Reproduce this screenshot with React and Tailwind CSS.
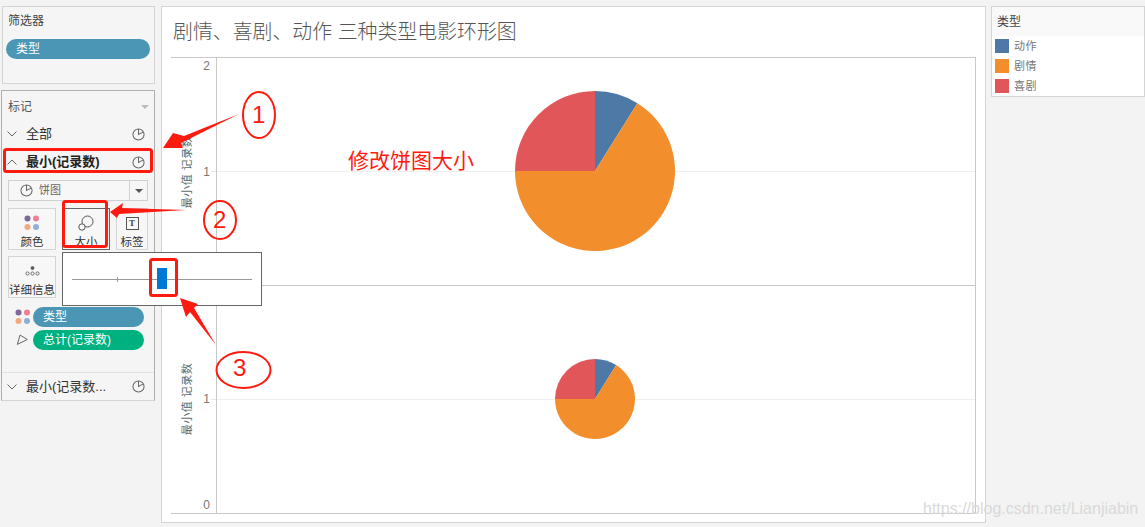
const CJK = '[font-family:"Liberation_Sans","Noto_Sans_CJK_SC",sans-serif]';

function PieIcon({ size = 13, color = '#666' }) {
  return (
    <svg width={size} height={size} viewBox="0 0 14 14" fill="none" stroke={color} strokeWidth="1.1">
      <circle cx="7" cy="7" r="6" />
      <path d="M7 1v6l4.8-2.6" stroke={color} />
    </svg>
  );
}

function Chevron({ up }) {
  return (
    <svg width="10" height="6" viewBox="0 0 10 6" fill="none" stroke="#666" strokeWidth="1">
      <path d={up ? 'M0.5 5.5L5 1l4.5 4.5' : 'M0.5 0.5L5 5l4.5-4.5'} />
    </svg>
  );
}

function ColorDots() {
  return (
    <svg width="16" height="16" viewBox="0 0 16 16">
      <circle cx="3.5" cy="3.5" r="3" fill="#7b6a9b" />
      <circle cx="12" cy="3.5" r="3" fill="#ef7f93" />
      <circle cx="3.5" cy="12" r="3" fill="#f2a97e" />
      <circle cx="12" cy="12" r="3" fill="#8db0d6" />
    </svg>
  );
}

function MarkButton({ label, icon, className = 'w-12' }) {
  return (
    <div className={`h-[42px] shrink-0 border border-[#d4d4d4] flex flex-col items-center justify-between pt-[5px] text-[11.5px] leading-[14px] text-[#333] bg-[#f7f7f7] ${className}`}>
      <div className="h-[18px] flex items-center">{icon}</div>
      <span className="whitespace-nowrap">{label}</span>
    </div>
  );
}

function Pill({ label, color, className = '' }) {
  return (
    <div className={`h-5 rounded-full text-white text-[12px] leading-5 pl-[10px] ${className}`} style={{ backgroundColor: color }}>
      {label}
    </div>
  );
}

function Pie({ r, cut }) {
  const c = r;
  const a = (cut * Math.PI) / 180;
  const x = c + r * Math.sin(a);
  const y = c - r * Math.cos(a);
  return (
    <svg width={r * 2} height={r * 2} viewBox={`0 0 ${r * 2} ${r * 2}`} className="relative">
      <path d={`M${c} ${c}L${c} 0A${r} ${r} 0 0 1 ${x} ${y}Z`} fill="#4e79a7" />
      <path d={`M${c} ${c}L${x} ${y}A${r} ${r} 0 1 1 0 ${c}Z`} fill="#f28e2b" />
      <path d={`M${c} ${c}L0 ${c}A${r} ${r} 0 0 1 ${c} 0Z`} fill="#e15759" />
    </svg>
  );
}

function AxisPane({ top, bottom, className = '' }) {
  return (
    <div className={`relative flex-1 flex items-center justify-end py-px ${className}`}>
      <span className="absolute left-[9px] top-1/2 -translate-y-1/2 rotate-180 [writing-mode:vertical-rl] [text-orientation:sideways] text-[11px] leading-[14px] tracking-[0.5px] text-[#5d6d6d] whitespace-nowrap">
        最小值 记录数
      </span>
      <div className="h-full flex flex-col justify-between items-end text-[12px] leading-[14px] text-[#777] pr-[6px]">
        <span className="h-[14px]">{top}</span>
        <span className="h-[14px]">1</span>
        <span className="h-[14px]">{bottom}</span>
      </div>
      <span className="absolute right-0 top-[113px] w-[5px] h-px bg-[#e6e6e6]" />
    </div>
  );
}

function PlotPane({ r, className = '' }) {
  return (
    <div className={`relative flex-1 flex items-center justify-center pb-[2px] pr-[2px] ${className}`}>
      <span className="absolute inset-x-0 top-[113px] h-px bg-[#efefef]" />
      <Pie r={r} cut={32} />
    </div>
  );
}

function LegendRow({ color, label }) {
  return (
    <div className="h-5 flex items-center gap-[5px]">
      <span className="w-[14px] h-[14px]" style={{ backgroundColor: color }} />
      <span className="pt-px text-[11px] text-[#777] tracking-[0.5px]">{label}</span>
    </div>
  );
}

function Annotations() {
  const red = '#ff1a0f';
  return (
    <svg width="1145" height="527" viewBox="0 0 1145 527" fill="none" className="absolute left-0 top-0 pointer-events-none">
      <rect x="4.5" y="149.5" width="147" height="22" rx="2" stroke={red} strokeWidth="3" />
      <rect x="63.5" y="201.5" width="43" height="45" rx="2" stroke={red} strokeWidth="3" />
      <rect x="150.5" y="259.5" width="26" height="36" rx="2" stroke={red} strokeWidth="3" />
      <ellipse cx="259" cy="115" rx="16" ry="23" stroke={red} strokeWidth="2" />
      <ellipse cx="220" cy="220" rx="16" ry="19" stroke={red} strokeWidth="2" />
      <ellipse cx="243.5" cy="370" rx="27" ry="18" stroke={red} strokeWidth="2" />
      <polygon points="239,114 184,136 173,133 163,148 183,148 181,143" fill={red} />
      <polygon points="186,210 122,208 123,203 110,212 117,218 119,214" fill={red} />
      <polygon points="216,345 194,308 198,304 180,298 186,317 190,312" fill={red} />
    </svg>
  );
}

export default function App() {
  return (
    <div className={`relative w-[1145px] h-[527px] overflow-hidden bg-[#f3f3f3] ${CJK}`}>
      <div className="flex h-full pt-[6px] pb-[4px] pl-[1px]">
        {/* left column */}
        <div className="w-[154px] shrink-0 flex flex-col gap-[6px]">
          <div className="h-[78px] border border-[#d4d4d4] bg-[#f5f5f5] pl-[3px] pr-[4px] pt-[7px] ml-px">
            <div className="text-[12px] leading-[14px] text-[#444] pl-[2px] mb-[11px]">筛选器</div>
            <Pill label="类型" color="#4a96b4" />
          </div>
          <div className="h-[311px] border border-[#b0b0b0] border-b-[#d4d4d4] bg-[#f5f5f5] flex flex-col">
            <div className="h-[29px] flex items-center justify-between pl-[6px] pr-[5px] pt-[2px] text-[12px] text-[#555]">
              <span>标记</span>
              <span className="w-0 h-0 border-x-[4px] border-x-transparent border-t-[4px] border-t-[#bbb]" />
            </div>
            <div className="h-[28px] flex items-center gap-[9px] pl-[5px] pr-[9px] text-[13px] text-[#333]">
              <Chevron />
              <span className="flex-1">全部</span>
              <PieIcon />
            </div>
            <div className="h-[28px] flex items-center gap-[9px] pl-[5px] pr-[9px] text-[13px] font-bold text-[#222]">
              <Chevron up />
              <span className="flex-1">最小(记录数)</span>
              <PieIcon />
            </div>
            <div className="mx-[6px] mt-[4px] h-[21px] border border-[#d0d0d0] flex items-center bg-[#f7f7f7]">
              <div className="flex-1 flex items-center gap-[6px] pl-[11px] text-[11px] text-[#666]">
                <PieIcon />
                <span>饼图</span>
              </div>
              <div className="w-[18px] h-full border-l border-[#d0d0d0] flex items-center justify-center">
                <span className="w-0 h-0 border-x-[4px] border-x-transparent border-t-[4px] border-t-[#555]" />
              </div>
            </div>
            <div className="flex gap-[6px] ml-[6px] mt-[7px]">
              <MarkButton label="颜色" icon={<ColorDots />} />
              <MarkButton
                label="大小"
                className="w-[48px] !border-[#666]"
                icon={
                  <svg width="16" height="16" viewBox="0 0 16 16" fill="none" stroke="#555" strokeWidth="1">
                    <circle cx="9.5" cy="6.5" r="5.5" />
                    <circle cx="4" cy="12" r="3.2" fill="#f7f7f7" />
                  </svg>
                }
              />
              <MarkButton
                label="标签"
                className="w-[32px]"
                icon={
                  <div className="w-[13px] h-[13px] border border-[#555] flex items-center justify-center text-[9px] leading-none font-bold text-[#444] [font-family:'Liberation_Serif',serif]">T</div>
                }
              />
            </div>
            <div className="ml-[6px] mt-[6px]">
              <MarkButton
                label="详细信息"
                icon={
                  <svg width="15" height="12" viewBox="0 0 15 12" fill="none" stroke="#555" strokeWidth="0.8">
                    <circle cx="7.5" cy="3" r="1.5" fill="#555" />
                    <circle cx="2.5" cy="8.5" r="1.6" />
                    <circle cx="7.5" cy="8.5" r="1.6" />
                    <circle cx="12.5" cy="8.5" r="1.6" />
                  </svg>
                }
              />
            </div>
            <div className="flex flex-col gap-[3px] mt-[9px] pl-[13px] pr-[10px]">
              <div className="flex items-center gap-[2px]">
                <ColorDots />
                <Pill label="类型" color="#4a96b4" className="flex-1" />
              </div>
              <div className="flex items-center gap-[2px]">
                <svg width="16" height="16" viewBox="0 0 16 16" fill="none" stroke="#666" strokeWidth="1">
                  <path d="M5 3l7.3 4.5L2.3 12.4z" />
                </svg>
                <Pill label="总计(记录数)" color="#00b180" className="flex-1" />
              </div>
            </div>
            <div className="mt-[22px] border-t border-[#e2e2e2] h-[28px] flex items-center gap-[9px] pl-[5px] pr-[9px] text-[13px] text-[#333]">
              <Chevron />
              <span className="flex-1">最小(记录数...</span>
              <PieIcon />
            </div>
          </div>
        </div>

        {/* main view */}
        <div className="w-[825px] shrink-0 ml-[6px] border border-[#d4d4d4] bg-white flex flex-col pl-[9px] pr-[9px] pb-[8px]">
          <div className="h-[50px] shrink-0 flex items-center pl-[2px] pt-[2px] text-[19.9px] text-[#555] font-light">
            剧情、喜剧、动作 三种类型电影环形图
          </div>
          <div className="flex-1 flex border-t border-b border-r border-[#c8c8c8]">
            <div className="w-[46px] shrink-0 border-r border-[#c8c8c8] flex flex-col">
              <AxisPane top="2" />
              <AxisPane bottom="0" />
            </div>
            <div className="flex-1 flex flex-col">
              <PlotPane r={80} className="border-b border-[#c8c8c8]" />
              <PlotPane r={40} />
            </div>
          </div>
        </div>

        {/* legend */}
        <div className="ml-[5px] flex-1 h-[91px] border border-[#d4d4d4] bg-white">
          <div className="h-[29px] bg-[#f9f9f9] flex items-center pl-[5px] text-[12px] text-[#444]">类型</div>
          <div className="pl-[3px]">
            <LegendRow color="#4e79a7" label="动作" />
            <LegendRow color="#f28e2b" label="剧情" />
            <LegendRow color="#e15759" label="喜剧" />
          </div>
        </div>
      </div>

      {/* size slider popup */}
      <div className="absolute left-[62px] top-[252px] w-[200px] h-[54px] border border-[#666] bg-white flex items-center px-[9px]">
        <div className="relative w-full h-px bg-[#999]">
          <span className="absolute left-[45px] -top-[2px] w-px h-[5px] bg-[#999]" />
          <span className="absolute left-[85px] -top-[11px] w-[10px] h-[21px] bg-[#0078d7]" />
        </div>
      </div>

      <Annotations />
      <span className="absolute left-[252px] top-[101px] text-[24px] leading-7 text-[#ff1a0f] [font-family:'Liberation_Sans',sans-serif]">1</span>
      <span className="absolute left-[213px] top-[206px] text-[24px] leading-7 text-[#ff1a0f] [font-family:'Liberation_Sans',sans-serif]">2</span>
      <span className="absolute left-[233px] top-[354px] text-[24px] leading-7 text-[#ff1a0f] [font-family:'Liberation_Sans',sans-serif]">3</span>
      <span className="absolute left-[348px] top-[147px] text-[21px] leading-7 text-[#ff1a0f]">修改饼图大小</span>
      <span className="absolute left-[923px] top-[499px] text-[16px] leading-5 text-[#d9d9d9] [font-family:'Liberation_Sans',sans-serif]">https://blog.csdn.net/Lianjiabin</span>
    </div>
  );
}
